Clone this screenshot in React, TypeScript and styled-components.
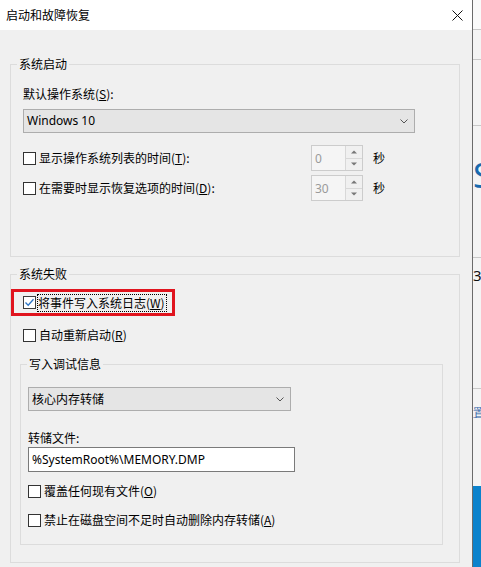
import React from 'react';
import styled, { createGlobalStyle } from 'styled-components';

const GlobalStyle = createGlobalStyle`
  html, body, #root {
    height: 100%;
  }
  body {
    margin: 0;
    overflow: hidden;
    font-family: "Noto Sans CJK SC", "Noto Sans", sans-serif;
    font-size: 12px;
    color: #000;
  }
`;

const Screen = styled.div`
  display: flex;
  width: 481px;
  height: 567px;
`;

const Dialog = styled.div`
  width: 473px;
  flex: 0 0 473px;
  box-sizing: border-box;
  border-right: 1px solid #6b6b6b;
  display: flex;
  flex-direction: column;
  background: #f0f0f0;
`;

const TitleBar = styled.div`
  height: 30px;
  flex: 0 0 30px;
  background: #fff;
  display: flex;
  align-items: center;
  justify-content: space-between;
  padding: 0 9px 0 6px;
  line-height: 16px;
`;

const Body = styled.div`
  flex: 1;
  padding: 26px 12px 0 10px;
`;

const Group = styled.fieldset<{ $gap?: number; $indent?: number; $trail?: number }>`
  margin: ${(p) => p.$gap ?? 0}px ${(p) => p.$trail ?? 0}px 0 ${(p) => p.$indent ?? 0}px;
  padding: 0;
  border: 1px solid #dcdcdc;
  min-width: 0;
`;

const Caption = styled.legend`
  margin-left: 6px;
  padding: 0 2px;
  line-height: 16px;
  height: 16px;
  color: #000;
`;

const GroupContent = styled.div<{ $pad: string }>`
  padding: ${(p) => p.$pad};
  display: flex;
  flex-direction: column;
  align-items: flex-start;
`;

const Label = styled.div<{ $gap?: number }>`
  margin-top: ${(p) => p.$gap ?? 0}px;
  line-height: 16px;
  height: 16px;
`;

const Combo = styled.div<{ $width: number; $gap?: number }>`
  margin-top: ${(p) => p.$gap ?? 0}px;
  width: ${(p) => p.$width}px;
  height: 24px;
  box-sizing: border-box;
  border: 1px solid #adadad;
  background: #e5e5e5;
  display: flex;
  align-items: center;
  justify-content: space-between;
  padding: 0 6px 0 3px;
  line-height: 16px;
`;

const LatinText = styled.span`
  font-family: "Noto Sans", "Open Sans", sans-serif;
  font-size: 12px;
`;

const TextBox = styled.div<{ $width: number; $gap?: number }>`
  margin-top: ${(p) => p.$gap ?? 0}px;
  width: ${(p) => p.$width}px;
  height: 25px;
  box-sizing: border-box;
  border: 1px solid #7a7a7a;
  background: #fff;
  display: flex;
  align-items: center;
  padding: 0 3px;
`;

const Row = styled.div<{ $gap?: number; $height?: number }>`
  margin-top: ${(p) => p.$gap ?? 0}px;
  height: ${(p) => p.$height ?? 16}px;
  display: flex;
  align-items: center;
`;

const CheckLabel = styled.label<{ $width?: number }>`
  display: flex;
  align-items: center;
  gap: 3px;
  line-height: 16px;
  ${(p) => (p.$width ? `flex: 0 0 ${p.$width}px;` : '')}
`;

const Box = styled.span<{ $checked?: boolean }>`
  width: 13px;
  height: 13px;
  box-sizing: border-box;
  border: 1px solid ${(p) => (p.$checked ? '#3c3c3c' : '#333')};
  background: #fff;
  display: inline-flex;
  align-items: center;
  justify-content: center;
  flex: 0 0 13px;
`;

const Spinner = styled.div`
  width: 52px;
  height: 26px;
  box-sizing: border-box;
  border: 1px solid #cccccc;
  background: #f5f5f5;
  display: flex;
`;

const SpinValue = styled.div`
  flex: 1;
  display: flex;
  align-items: center;
  padding-left: 3px;
  color: #9a9a9a;
`;

const SpinButtons = styled.div`
  width: 16px;
  display: flex;
  flex-direction: column;
  border-left: 1px solid #d8d8d8;
`;

const SpinButton = styled.div<{ $down?: boolean }>`
  flex: 1;
  display: flex;
  align-items: center;
  justify-content: center;
  background: #f0f0f0;
  ${(p) => (p.$down ? 'border-top: 1px solid #d8d8d8;' : '')}
`;

const Unit = styled.span`
  margin-left: 10px;
  line-height: 16px;
`;

const Highlight = styled.div`
  margin: 7px 0 0 -12px;
  width: 164px;
  height: 27px;
  box-sizing: border-box;
  border: 3px solid #e0141e;
  display: flex;
  align-items: center;
  padding-left: 9px;
`;

const Focused = styled.span`
  border: 1px dotted #000;
  line-height: 16px;
  padding: 0 1px 0 0;
  margin-left: -2px;
`;

const Strip = styled.div`
  flex: 1;
  display: flex;
  flex-direction: column;
  overflow: hidden;
  background: #f4f4f4;
`;

const StripCell = styled.div<{ $height: number; $line?: boolean; $bg?: string }>`
  flex: 0 0 ${(p) => p.$height}px;
  height: ${(p) => p.$height}px;
  box-sizing: border-box;
  overflow: hidden;
  background: ${(p) => p.$bg ?? 'transparent'};
  ${(p) => (p.$line ? 'border-bottom: 1px solid #c9c9c9;' : '')}
  white-space: nowrap;
`;

const StripGlyph = styled.span<{ $size: number; $color: string; $top: number }>`
  display: block;
  margin-top: ${(p) => p.$top}px;
  font-family: "Noto Sans", sans-serif;
  font-size: ${(p) => p.$size}px;
  line-height: 1;
  color: ${(p) => p.$color};
`;

function Chevron() {
  return (
    <svg width="8" height="5" viewBox="0 0 8 5">
      <polyline points="0.5,0.5 4,4 7.5,0.5" fill="none" stroke="#555" strokeWidth="1" />
    </svg>
  );
}

function Tick() {
  return (
    <svg width="11" height="11" viewBox="0 0 11 11">
      <polyline points="1.5,5.5 4.2,8.3 9.5,2.2" fill="none" stroke="#2a73c4" strokeWidth="1.3" />
    </svg>
  );
}

function Check({ checked }: { checked?: boolean }) {
  return <Box $checked={checked}>{checked && <Tick />}</Box>;
}

function Arrow({ down }: { down?: boolean }) {
  return (
    <svg width="6" height="4" viewBox="0 0 6 4">
      <polygon points={down ? '0,0.5 6,0.5 3,3.5' : '0,3.5 6,3.5 3,0.5'} fill="#777" />
    </svg>
  );
}

function SpinBox({ value }: { value: string }) {
  return (
    <Spinner>
      <SpinValue>
        <LatinText>{value}</LatinText>
      </SpinValue>
      <SpinButtons>
        <SpinButton>
          <Arrow />
        </SpinButton>
        <SpinButton $down>
          <Arrow down />
        </SpinButton>
      </SpinButtons>
    </Spinner>
  );
}

function App() {
  return (
    <Screen>
      <GlobalStyle />
      <Dialog>
        <TitleBar>
          <span>启动和故障恢复</span>
          <svg width="11" height="11" viewBox="0 0 11 11">
            <path d="M0.5 0.5 L10.5 10.5 M10.5 0.5 L0.5 10.5" stroke="#111" strokeWidth="1" />
          </svg>
        </TitleBar>
        <Body>
          <Group>
            <Caption>系统启动</Caption>
            <GroupContent $pad="14px 12px 55px 12px">
              <Label>
                默认操作系统(<u>S</u>):
              </Label>
              <Combo $width={392} $gap={7}>
                <LatinText>Windows 10</LatinText>
                <Chevron />
              </Combo>
              <Row $gap={12} $height={26}>
                <CheckLabel $width={288}>
                  <Check />
                  <span>
                    显示操作系统列表的时间(<u>T</u>):
                  </span>
                </CheckLabel>
                <SpinBox value="0" />
                <Unit>秒</Unit>
              </Row>
              <Row $gap={4} $height={26}>
                <CheckLabel $width={288}>
                  <Check />
                  <span>
                    在需要时显示恢复选项的时间(<u>D</u>):
                  </span>
                </CheckLabel>
                <SpinBox value="30" />
                <Unit>秒</Unit>
              </Row>
            </GroupContent>
          </Group>

          <Group $gap={9}>
            <Caption>系统失败</Caption>
            <GroupContent $pad="0 12px 17px 12px">
              <Highlight>
                <CheckLabel>
                  <Check checked />
                  <Focused>
                    将事件写入系统日志(<u>W</u>)
                  </Focused>
                </CheckLabel>
              </Highlight>
              <Row $gap={11}>
                <CheckLabel>
                  <Check />
                  <span>
                    自动重新启动(<u>R</u>)
                  </span>
                </CheckLabel>
              </Row>
              <Group $gap={13} $indent={-3} style={{ alignSelf: 'stretch', marginRight: 4 }}>
                <Caption>写入调试信息</Caption>
                <GroupContent $pad="0 7px 16px 7px">
                  <Combo $width={263} $gap={15}>
                    <span>核心内存转储</span>
                    <Chevron />
                  </Combo>
                  <Label $gap={19}>转储文件:</Label>
                  <TextBox $width={267} $gap={1}>
                    <LatinText>{'%SystemRoot%\\MEMORY.DMP'}</LatinText>
                  </TextBox>
                  <Row $gap={11}>
                    <CheckLabel>
                      <Check />
                      <span>
                        覆盖任何现有文件(<u>O</u>)
                      </span>
                    </CheckLabel>
                  </Row>
                  <Row $gap={13}>
                    <CheckLabel>
                      <Check />
                      <span>
                        禁止在磁盘空间不足时自动删除内存转储(<u>A</u>)
                      </span>
                    </CheckLabel>
                  </Row>
                </GroupContent>
              </Group>
            </GroupContent>
          </Group>
        </Body>
      </Dialog>
      <Strip>
        <StripCell $height={30} $line $bg="#fafafa" />
        <StripCell $height={30} $line />
        <StripCell $height={66} $line />
        <StripCell $height={132} $line>
          <StripGlyph $size={34} $color="#1a6aae" $top={32}>
            S
          </StripGlyph>
        </StripCell>
        <StripCell $height={131} $line>
          <StripGlyph $size={15} $color="#111" $top={10}>
            3
          </StripGlyph>
        </StripCell>
        <StripCell $height={97}>
          <StripGlyph $size={12} $color="#2c5ea6" $top={18}>
            置
          </StripGlyph>
        </StripCell>
        <StripCell $height={81} $bg="#0b82cc" />
      </Strip>
    </Screen>
  );
}

export default App;
